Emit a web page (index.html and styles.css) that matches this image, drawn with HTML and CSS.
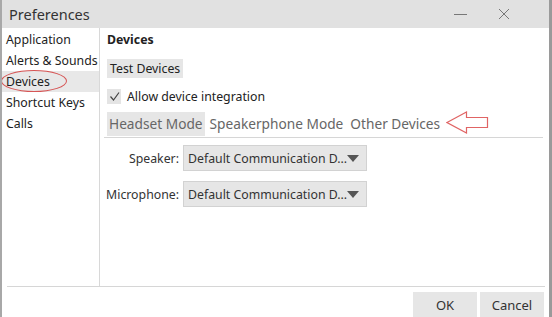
FILE: index.html
```html
<!DOCTYPE html>
<html>
<head>
<meta charset="utf-8">
<title>Preferences</title>
<link rel="stylesheet" href="styles.css">
</head>
<body>
<div class="window">
	<div class="title-bar">
		<div class="title">Preferences</div>
		<div class="title-buttons">
			<svg class="tb-icon" width="14" height="14" viewBox="0 0 14 14"><line x1="0" y1="7.5" x2="13" y2="7.5" stroke="#777" stroke-width="1"/></svg>
			<svg class="tb-icon" width="12" height="12" viewBox="0 0 12 12"><path d="M1 1 L11 11 M11 1 L1 11" stroke="#777" stroke-width="1" fill="none"/></svg>
		</div>
	</div>
	<div class="main">
		<div class="sidebar">
			<div class="side-item">Application</div>
			<div class="side-item">Alerts &amp; Sounds</div>
			<div class="side-item selected">Devices</div>
			<div class="side-item">Shortcut Keys</div>
			<div class="side-item">Calls</div>
			<div class="mark-ellipse"></div>
		</div>
		<div class="content">
			<div class="heading">Devices</div>
			<div class="row"><button class="gbutton" type="button">Test Devices</button></div>
			<div class="check-row">
				<span class="checkbox"><svg width="11" height="11" viewBox="0 0 11 11"><path d="M1.5 5.5 L4.5 9 L10 1.5" stroke="#444" stroke-width="1.2" fill="none"/></svg></span>
				<span>Allow device integration</span>
			</div>
			<div class="tabs">
				<div class="tab active">Headset Mode</div>
				<div class="tab">Speakerphone Mode</div>
				<div class="tab">Other Devices</div>
				<svg class="mark-arrow" width="44" height="24" viewBox="0 0 44 24"><path d="M1 11.5 L20.5 1 L20.5 6.5 L41.5 6.5 L41.5 16.5 L20.5 16.5 L20.5 22 Z" fill="none" stroke="#e06464" stroke-width="1.2"/></svg>
			</div>
			<div class="form-grid">
				<div class="form-label">Speaker:</div>
				<div class="select"><span>Default Communication D...</span><span class="caret"></span></div>
				<div class="form-label">Microphone:</div>
				<div class="select"><span>Default Communication D...</span><span class="caret"></span></div>
			</div>
		</div>
	</div>
	<div class="footer">
		<button class="fbutton" type="button">OK</button>
		<button class="fbutton" type="button">Cancel</button>
	</div>
</div>
</body>
</html>
```
FILE: styles.css
```css
* {
	box-sizing: border-box;
}

body {
	margin: 0;
	font-family: 'Noto Sans', 'Open Sans', sans-serif;
	font-size: 12.3px;
	color: #222;
	background: #fff;
}

.window {
	width: 552px;
	height: 317px;
	border-left: 2px solid #a8a8a8;
	border-right: 3px solid #9a9a9a;
	display: flex;
	flex-direction: column;
	overflow: hidden;
}

.title-bar {
	height: 28px;
	background: #e1e1e1;
	display: flex;
	align-items: center;
	justify-content: space-between;
	padding: 0 39px 0 7px;
}
.title {
	font-size: 14.5px;
	color: #333;
}
.title-buttons {
	display: flex;
	align-items: center;
	gap: 30px;
}
.tb-icon {
	display: block;
}

.main {
	display: flex;
	height: 258px;
}
.sidebar {
	position: relative;
	width: 98px;
	border-right: 1px solid #d8d8d8;
	padding-top: 1px;
}
.side-item {
	height: 21px;
	line-height: 21px;
	padding-left: 4px;
	white-space: nowrap;
}
.side-item.selected {
	background: #e8e8e8;
}
.mark-ellipse {
	position: absolute;
	left: -1px;
	top: 42px;
	width: 66px;
	height: 22px;
	border: 1px solid #d65555;
	border-radius: 50%;
}

.content {
	flex: 1;
	padding: 0 6px 0 4px;
}
.heading {
	font-weight: bold;
	height: 24px;
	line-height: 24px;
	padding-left: 3px;
}
.row {
	padding-left: 3px;
	margin-top: 7px;
}
.gbutton {
	font-family: inherit;
	font-size: 12.3px;
	color: #222;
	background: #e6e6e6;
	border: none;
	height: 19px;
	padding: 0 3px;
	line-height: 19px;
}
.check-row {
	display: flex;
	align-items: center;
	gap: 6px;
	padding-left: 3px;
	margin-top: 10px;
	height: 16px;
}
.checkbox {
	width: 14px;
	height: 15px;
	background: #e4e4e4;
	display: flex;
	align-items: center;
	justify-content: center;
}
.checkbox svg {
	display: block;
}

.tabs {
	position: relative;
	display: flex;
	align-items: stretch;
	gap: 3px;
	margin-top: 8px;
	height: 26px;
	padding-left: 3px;
	border-bottom: 1px solid #d6d6d6;
	padding-bottom: 1px;
}
.tab {
	font-size: 13.7px;
	color: #666;
	padding: 0 2px;
	line-height: 24px;
	white-space: nowrap;
}
.tab.active {
	background: #e6e6e6;
}
.mark-arrow {
	position: absolute;
	left: 342px;
	top: -1px;
}

.form-grid {
	display: grid;
	grid-template-columns: 75px 184px;
	column-gap: 4px;
	row-gap: 10px;
	margin-top: 7px;
	align-items: center;
}
.form-label {
	text-align: right;
	color: #333;
}
.select {
	height: 26px;
	background: #e6e6e6;
	border: 1px solid #d2d2d2;
	display: flex;
	align-items: center;
	justify-content: space-between;
	padding: 0 8px 0 4px;
	white-space: nowrap;
	color: #333;
}
.caret {
	width: 0;
	height: 0;
	border-left: 6px solid transparent;
	border-right: 6px solid transparent;
	border-top: 7px solid #555;
}

.footer {
	margin: 0 4px 0 5px;
	border-top: 1px solid #d6d6d6;
	display: flex;
	justify-content: flex-end;
	gap: 3px;
	padding-top: 5px;
	padding-right: 1px;
}
.fbutton {
	font-family: inherit;
	font-size: 13px;
	color: #333;
	background: #e6e6e6;
	border: none;
	width: 64px;
	height: 25px;
}
```
